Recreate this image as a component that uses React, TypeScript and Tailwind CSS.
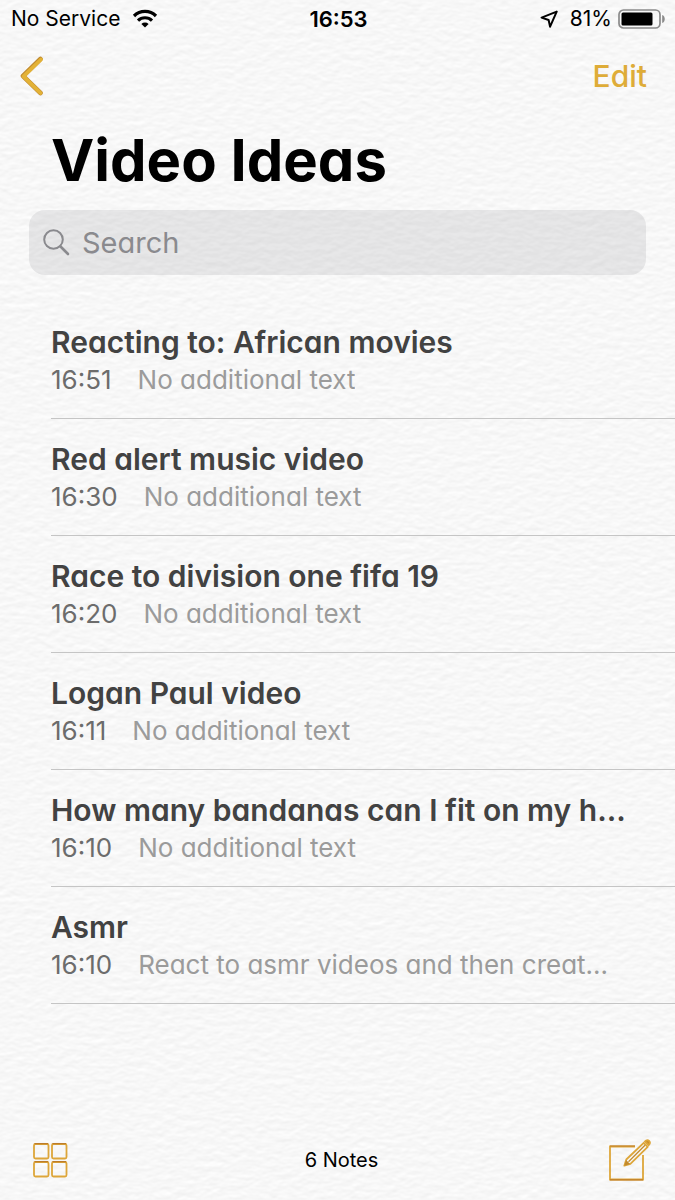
import React from 'react';

interface Note {
  id: number;
  title: string;
  time: string;
  preview: string;
}

const NOTES: Note[] = [
  { id: 1, title: 'Reacting to: African movies', time: '16:51', preview: 'No additional text' },
  { id: 2, title: 'Red alert music video', time: '16:30', preview: 'No additional text' },
  { id: 3, title: 'Race to division one fifa 19', time: '16:20', preview: 'No additional text' },
  { id: 4, title: 'Logan Paul video', time: '16:11', preview: 'No additional text' },
  { id: 5, title: 'How many bandanas can I fit on my h...', time: '16:10', preview: 'No additional text' },
  { id: 6, title: 'Asmr', time: '16:10', preview: 'React to asmr videos and then creat...' },
];

// Embossed paper grain behind the whole page
const PaperTexture: React.FC = () => (
  <svg className="absolute inset-0 -z-10 h-full w-full" aria-hidden="true">
    <filter id="paper" x="0" y="0" width="100%" height="100%" colorInterpolationFilters="sRGB">
      <feTurbulence type="fractalNoise" baseFrequency="0.1 0.17" numOctaves="2" seed="4" result="noise" />
      <feDiffuseLighting in="noise" lightingColor="#ffffff" surfaceScale="0.14" diffuseConstant="1.12">
        <feDistantLight azimuth="260" elevation="60" />
      </feDiffuseLighting>
    </filter>
    <rect width="100%" height="100%" filter="url(#paper)" />
  </svg>
);

const StatusBar: React.FC = () => (
  <div className="grid h-[38px] grid-cols-3 items-center pl-[11px] pr-[9px] text-[21px] leading-6 text-black">
    <div className="flex items-center gap-3 whitespace-nowrap">
      <span>No Service</span>
      <svg className="h-5 w-[26px]" viewBox="0 0 26 20" fill="none" stroke="#000" strokeWidth="3.2" aria-label="Wi-Fi">
        <path d="M2 7a15.6 15.6 0 0 1 22 0" />
        <path d="M6 11.6a10 10 0 0 1 14 0" />
        <path d="M13 18.6l-3.6-3.6a5.1 5.1 0 0 1 7.2 0z" fill="#000" stroke="none" />
      </svg>
    </div>
    <span className="text-center text-[22px] font-semibold">16:53</span>
    <div className="flex items-center justify-end whitespace-nowrap">
      <svg className="mr-3 h-[18px] w-[18px]" viewBox="0 0 18 18" fill="none" stroke="#000" strokeWidth="2" strokeLinejoin="round" aria-label="Location">
        <path d="M16.7 1.6L1.6 7.6l7 2.4 1.5 6.7z" />
      </svg>
      <span className="mr-1.5">81%</span>
      <svg className="h-5 w-12" viewBox="0 0 48 20" fill="none" aria-label="Battery">
        <rect x="1" y="1" width="41" height="18" rx="4.5" stroke="#8a8a8a" strokeWidth="1.7" />
        <rect x="3.5" y="3.5" width="31" height="13" rx="1.5" fill="#000" />
        <path d="M44.2 6c3.4 1 3.4 7 0 8z" fill="#8a8a8a" />
      </svg>
    </div>
  </div>
);

const NoteRow: React.FC<{ note: Note }> = ({ note }) => (
  <li className="border-b border-[#c5c5c5]">
    <a href={`#note-${note.id}`} className="block pt-5 pb-5 pr-10">
      <h2 className="truncate text-[30px] leading-10 font-semibold text-[#424242]">{note.title}</h2>
      <p className="flex gap-[26px] text-[26px] leading-9 text-[#6c6c6c]">
        <time>{note.time}</time>
        <span className="truncate text-[#9b9b9b]">{note.preview}</span>
      </p>
    </a>
  </li>
);

const App: React.FC = () => {
  return (
    <div className="relative isolate flex min-h-screen flex-col overflow-hidden bg-[#f6f6f6] font-['Inter',sans-serif] [font-feature-settings:'cv11']">
      <PaperTexture />
      <StatusBar />

      {/* Navigation */}
      <nav className="flex h-[76px] items-center justify-between pl-5 pr-7">
        <button type="button" aria-label="Back">
          <svg className="h-10 w-6" viewBox="0 0 24 40" fill="none" strokeLinecap="round" strokeLinejoin="round">
            <path d="M20.5 3L3 20l17.5 17" stroke="#c08a30" strokeWidth="4.6" />
            <path d="M21 3.5L3.5 20.3l17 16.7" stroke="#e3b236" strokeWidth="3.8" />
          </svg>
        </button>
        <button type="button" className="text-[30px] leading-10 font-medium text-[#deac38]">Edit</button>
      </nav>

      <header className="px-[29px]">
        <h1 className="pl-[22px] pt-2.5 text-[58px] leading-[72px] font-bold text-black">Video Ideas</h1>
        <label className="mt-3.5 flex h-[65px] items-center gap-[11px] rounded-2xl bg-[#86868f]/17 px-3.5">
          <svg className="h-7 w-7 shrink-0" viewBox="0 0 28 28" fill="none" stroke="#8a8a8e" strokeLinecap="round" aria-hidden="true">
            <circle cx="10.5" cy="10.5" r="9.3" strokeWidth="2" />
            <path d="M17.5 17.5L25 25" strokeWidth="2.6" />
          </svg>
          <input
            type="text"
            aria-label="Search"
            placeholder="Search"
            className="min-w-0 flex-1 bg-transparent text-[29px] leading-10 outline-none placeholder:text-[#8a8a8e]"
          />
        </label>
      </header>

      <main className="flex-1 pt-[27px] pl-[51px]">
        <ul>
          {NOTES.map((note) => (
            <NoteRow key={note.id} note={note} />
          ))}
        </ul>
      </main>

      {/* Toolbar */}
      <footer className="grid h-20 grid-cols-3 items-center pl-8 pr-6">
        <button type="button" aria-label="Attachments" className="justify-self-start">
          <svg className="h-9 w-9" viewBox="0 0 36 36" fill="none" stroke="#dda63a" strokeWidth="1.8">
            <rect x="2" y="2" width="14.5" height="14.5" rx="1.5" />
            <rect x="20" y="2" width="14.5" height="14.5" rx="1.5" />
            <rect x="2" y="20" width="14.5" height="14.5" rx="1.5" />
            <rect x="20" y="20" width="14.5" height="14.5" rx="1.5" />
            <path d="M2.5 1.6h13.5M20.5 1.6h13.5M2.5 19.6h13.5M20.5 19.6h13.5" stroke="#bd7c28" strokeWidth="1.2" />
          </svg>
        </button>
        <span className="text-center text-xl text-black">6 Notes</span>
        <button type="button" aria-label="New note" className="justify-self-end">
          <svg className="h-11 w-11" viewBox="0 0 44 44" fill="none" stroke="#dda63a" strokeWidth="1.8">
            <path d="M28 8.5H3v33h33V17" />
            <path d="M28 8H3M3 41.8h33" stroke="#bd7c28" strokeWidth="1.2" />
            <path d="M17.3 27.7l2-6.2L36.7 4.8l4 4L23.4 25.8z" strokeLinejoin="round" />
            <path d="M17.3 27.7l1.8-5.8 4 4z" fill="#c28a2c" stroke="none" />
            <path d="M21.5 23.7L38 7.3" stroke="#c28a2c" strokeWidth="1.2" />
            <path d="M38 3.5l1.2-1c2-1.2 4.6 1.2 3.4 3.4l-1 1.2z" fill="#c98d2b" />
          </svg>
        </button>
      </footer>
    </div>
  );
};

export default App;
